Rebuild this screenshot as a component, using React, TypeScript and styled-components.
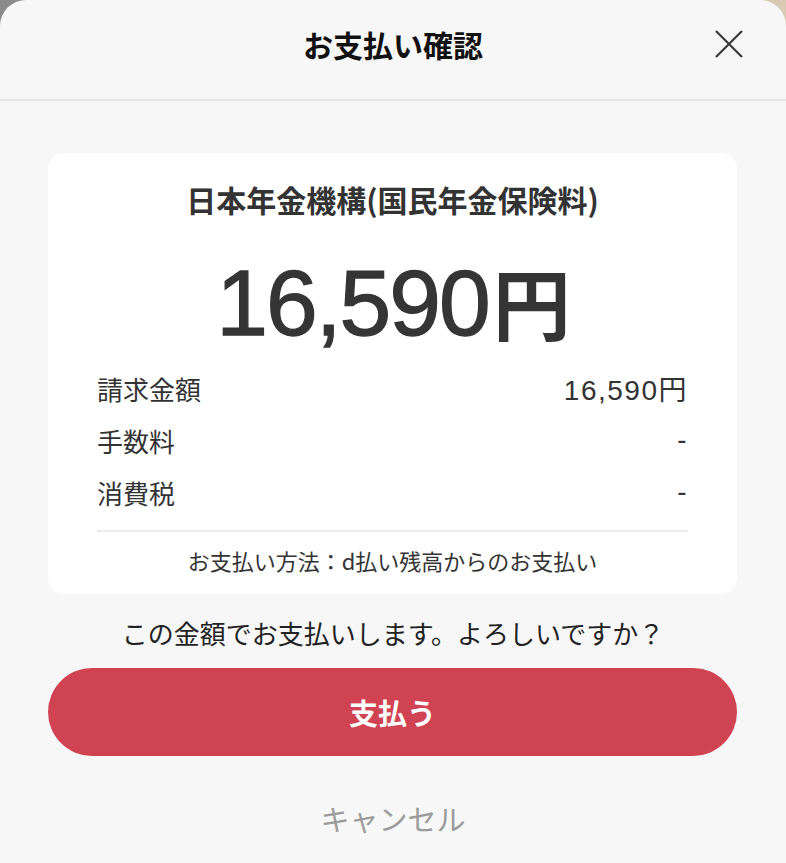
import styled, { createGlobalStyle } from 'styled-components';

const GlobalStyle = createGlobalStyle`
  html, body {
    margin: 0;
    padding: 0;
  }
  body {
    background: linear-gradient(90deg, #8a8a8a 0%, #b9b2a6 60%, #d9ccb4 100%);
    font-family: "Noto Sans CJK JP", "Noto Sans", sans-serif;
    -webkit-font-smoothing: antialiased;
  }
`;

const Sheet = styled.div`
  min-height: 863px;
  background: #f7f7f7;
  border-radius: 26px 26px 0 0;
  display: flex;
  flex-direction: column;
`;

const Header = styled.header`
  height: 101px;
  display: grid;
  grid-template-columns: 1fr auto 1fr;
  align-items: center;
  padding-bottom: 12px;
  box-sizing: border-box;
  border-bottom: 2px solid #e6e6e6;
`;

const HeaderTitle = styled.h1`
  grid-column: 2;
  margin: 0;
  font-size: 30px;
  font-weight: 700;
  color: #111;
  line-height: 36px;
`;

const CloseButton = styled.button`
  grid-column: 3;
  justify-self: end;
  margin-right: 43px;
  width: 28px;
  height: 28px;
  padding: 0;
  border: none;
  background: none;
  display: flex;
  cursor: pointer;
`;

const Card = styled.section`
  margin: 52px 49px 0 48px;
  background: #fff;
  border-radius: 16px;
  padding: 28px 49px 19px;
  display: flex;
  flex-direction: column;
  align-items: stretch;
`;

const Payee = styled.div`
  text-align: center;
  font-size: 30px;
  font-weight: 700;
  line-height: 36px;
  color: #333;
`;

const Amount = styled.div`
  margin-top: 30px;
  text-align: center;
  font-family: "Liberation Sans", "Noto Sans CJK JP", sans-serif;
  font-size: 93px;
  line-height: 108px;
  letter-spacing: -2px;
  font-weight: 400;
  color: #353535;
  -webkit-text-stroke: 1.3px #353535;
`;

const Yen = styled.span`
  font-family: "Noto Sans CJK JP", sans-serif;
  font-size: 78px;
  font-weight: 700;
  margin-left: 4px;
  -webkit-text-stroke: 0;
`;

const Rows = styled.div`
  margin-top: 5px;
  display: flex;
  flex-direction: column;
`;

const Row = styled.div`
  height: 52px;
  display: flex;
  align-items: center;
  justify-content: space-between;
  font-size: 26px;
  color: #333;
`;

const RowValue = styled.span`
  font-family: "Liberation Sans", "Noto Sans CJK JP", sans-serif;
  font-size: 28px;
  letter-spacing: 1.5px;
  color: #333;
`;

const Divider = styled.hr`
  margin: 12px 0 0;
  border: none;
  border-top: 2px solid #ececec;
`;

const Method = styled.p`
  margin: 13px 0 0;
  text-align: center;
  font-size: 22px;
  line-height: 30px;
  color: #333;
`;

const Question = styled.p`
  margin: 21px 0 0;
  text-align: center;
  font-size: 26px;
  line-height: 36px;
  color: #222;
`;

const PayButton = styled.button`
  margin: 17px 49px 0 48px;
  height: 88px;
  border: none;
  border-radius: 44px;
  background: #d04352;
  color: #fff;
  font-family: inherit;
  font-size: 29px;
  font-weight: 700;
  cursor: pointer;
`;

const CancelButton = styled.button`
  margin: 42px auto 0;
  border: none;
  background: none;
  padding: 0;
  font-family: inherit;
  font-size: 29px;
  line-height: 40px;
  color: #9b9b9b;
  cursor: pointer;
`;

interface Line {
  label: string;
  value: string;
}

const lines: Line[] = [
  { label: '請求金額', value: '16,590円' },
  { label: '手数料', value: '-' },
  { label: '消費税', value: '-' },
];

function App() {
  return (
    <>
      <GlobalStyle />
      <Sheet>
        <Header>
          <HeaderTitle>お支払い確認</HeaderTitle>
          <CloseButton aria-label="閉じる">
            <svg width="28" height="28" viewBox="0 0 28 28">
              <path d="M1 1 L27 27 M27 1 L1 27" stroke="#3a3a3a" strokeWidth="2.2" fill="none" />
            </svg>
          </CloseButton>
        </Header>
        <Card>
          <Payee>日本年金機構(国民年金保険料)</Payee>
          <Amount>
            16,590<Yen>円</Yen>
          </Amount>
          <Rows>
            {lines.map((line) => (
              <Row key={line.label}>
                <span>{line.label}</span>
                <RowValue>{line.value}</RowValue>
              </Row>
            ))}
          </Rows>
          <Divider />
          <Method>お支払い方法：d払い残高からのお支払い</Method>
        </Card>
        <Question>この金額でお支払いします。よろしいですか？</Question>
        <PayButton>支払う</PayButton>
        <CancelButton>キャンセル</CancelButton>
      </Sheet>
    </>
  );
}

export default App;
